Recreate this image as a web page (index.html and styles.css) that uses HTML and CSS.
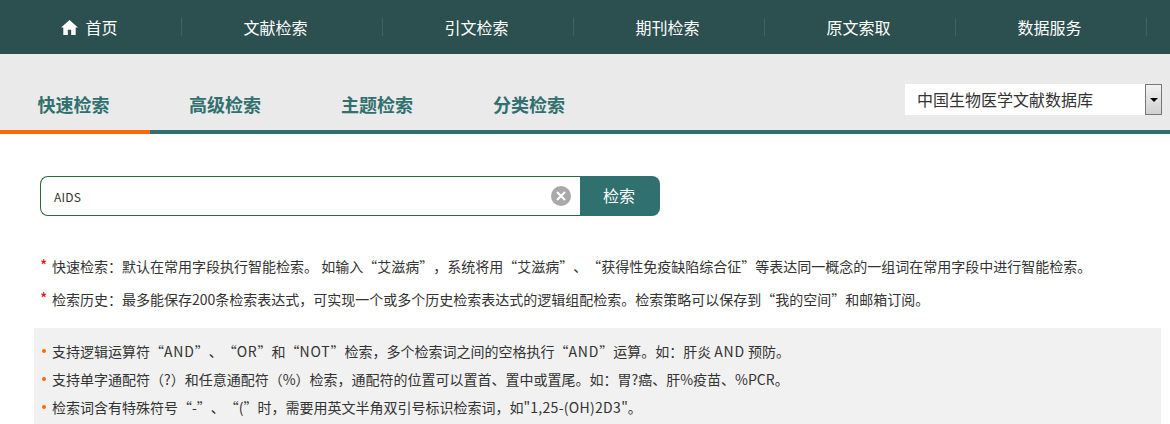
FILE: index.html
```html
<!DOCTYPE html>
<html lang="zh">
<head>
<meta charset="utf-8">
<title>快速检索</title>
<link rel="stylesheet" href="styles.css">
</head>
<body>
<nav class="nav">
  <a class="nav-item home"><svg class="home-icon" viewBox="0 0 18 16" width="17" height="15"><path d="M9 0 L18 8 L15.6 8 L15.6 16 L10.8 16 L10.8 10.5 L7.2 10.5 L7.2 16 L2.4 16 L2.4 8 L0 8 Z" fill="#fff"/></svg>首页</a>
  <a class="nav-item wide">文献检索</a>
  <a class="nav-item">引文检索</a>
  <a class="nav-item">期刊检索</a>
  <a class="nav-item">原文索取</a>
  <a class="nav-item">数据服务</a>
</nav>
<div class="tabbar">
  <a class="tab active">快速检索</a>
  <a class="tab">高级检索</a>
  <a class="tab">主题检索</a>
  <a class="tab">分类检索</a>
  <div class="db">
    <span class="db-name">中国生物医学文献数据库</span>
    <span class="db-btn"><i class="caret"></i></span>
  </div>
</div>
<form class="search">
  <div class="search-box">
    <span class="search-text">AIDS</span>
    <svg class="clear" viewBox="0 0 20 20" width="20" height="20"><circle cx="10" cy="10" r="10" fill="#a9a9a9"/><path d="M6 6 L14 14 M14 6 L6 14" stroke="#fff" stroke-width="2"/></svg>
  </div>
  <div class="search-btn">检索</div>
</form>
<div class="notes">
  <p class="note"><span class="star">*</span>快速检索：默认在常用字段执行智能检索。 如输入“艾滋病”，系统将用“艾滋病”、“获得性免疫缺陷综合征”等表达同一概念的一组词在常用字段中进行智能检索。</p>
  <p class="note"><span class="star">*</span>检索历史：最多能保存200条检索表达式，可实现一个或多个历史检索表达式的逻辑组配检索。检索策略可以保存到“我的空间”和邮箱订阅。</p>
</div>
<ul class="tips">
  <li>支持逻辑运算符“<span class="en">AND</span>”、“<span class="en">OR</span>”和“<span class="en">NOT</span>”检索，多个检索词之间的空格执行“<span class="en">AND</span>”运算。如：肝炎 <span class="en">AND</span> 预防。</li>
  <li>支持单字通配符（?）和任意通配符（%）检索，通配符的位置可以置首、置中或置尾。如：胃?癌、肝%疫苗、%PCR。</li>
  <li>检索词含有特殊符号“-”、“(”时，需要用英文半角双引号标识检索词，如"<span class="en-sm">1,25-(OH)2D3</span>"。</li>
</ul>
</body>
</html>
```
FILE: styles.css
```css
* { box-sizing: border-box; }
html, body { margin: 0; padding: 0; height: 424px; overflow: hidden; background: #fff; }
body { font-family: "Noto Sans CJK SC", sans-serif; color: #333; text-spacing-trim: space-all; }
.nav { display: flex; height: 54px; background: #2c4f4f; align-items: center; }
.nav-item { flex: 0 0 191px; height: 18px; line-height: 16px; padding-right: 3px; color: #fff; font-size: 16px; border-right: 1px solid #3a6464; display: flex; align-items: center; justify-content: center; }
.home { flex-basis: 182px; padding-right: 2px; }
.wide { flex-basis: 201px; padding-right: 13px; }
.home-icon { margin-right: 7px; }
.tabbar { position: relative; display: flex; height: 80px; background: #eaeaea; border-bottom: 4px solid #30706e; padding-top: 38px; }
.tab { width: 152px; height: 38px; line-height: 24px; padding-right: 2px; text-align: center; font-size: 18px; font-weight: 700; color: #30706e; }
.tab.active { width: 150px; height: 42px; padding-right: 3px; border-bottom: 4px solid #ff6a00; }
.db { position: absolute; left: 905px; top: 30px; display: flex; width: 257px; height: 31px; }
.db-name { width: 240px; height: 31px; background: #fff; font-size: 16px; line-height: 31px; padding-left: 12px; color: #333; }
.db-btn { width: 17px; height: 31px; border: 1px solid #777; background: linear-gradient(#f2f2f2, #d0d0d0); display: flex; align-items: center; justify-content: center; }
.caret { width: 0; height: 0; border-left: 4px solid transparent; border-right: 4px solid transparent; border-top: 4px solid #000; }
.search { display: flex; margin: 42px 0 0 40px; width: 620px; height: 40px; }
.search-box { flex: 1; display: flex; align-items: center; justify-content: space-between; border: 1px solid #2a6a3a; border-right: 0; border-radius: 8px 0 0 8px; padding: 0 9px 0 13px; }
.search-text { font-size: 12px; line-height: 16px; padding-top: 2px; letter-spacing: 0.2px; color: #333; }
.search-btn { width: 80px; padding-right: 2px; background: #30706e; color: #fff; font-size: 16px; line-height: 39px; text-align: center; border-radius: 0 8px 8px 0; }
.notes { height: 112px; margin-left: 40px; padding-top: 41px; }
.note { margin: 0 0 15px; font-size: 14px; line-height: 18px; color: #333; white-space: nowrap; }
.star { display: inline-block; width: 12px; color: #f00; font-size: 16px; line-height: 16px; }
.en { letter-spacing: 0.8px; }
.en-sm { letter-spacing: 0.3px; }
.tips { list-style: none; margin: 0 9px 0 34px; padding: 9px 0 0 8px; background: #f1f1f1; height: 96px; }
.tips li { font-size: 14px; line-height: 28px; color: #333; white-space: nowrap; padding-left: 10px; position: relative; }
.tips li::before { content: ""; position: absolute; left: 0; top: 12px; width: 4px; height: 4px; border-radius: 50%; background: #f36a10; }
```
